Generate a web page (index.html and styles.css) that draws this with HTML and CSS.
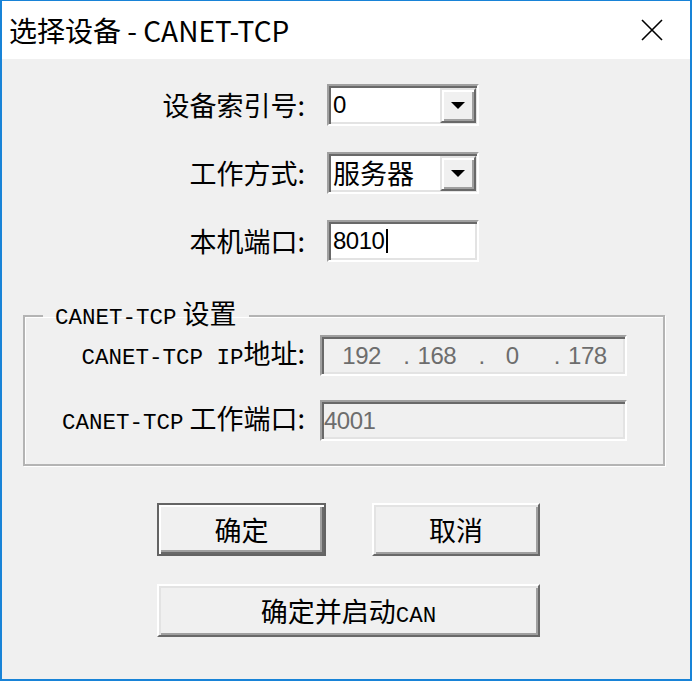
FILE: index.html
```html
<!DOCTYPE html>
<html>

<head>
  <meta charset="utf-8" />
  <title>选择设备 - CANET-TCP</title>
  <link rel="stylesheet" href="styles.css">
</head>

<body>
  <div class="window">
    <div class="titlebar">
      <span class="title">选择设备 - CANET-TCP</span>
      <svg class="close" width="22" height="22" viewBox="0 0 22 22">
        <path d="M1 1L21 21M21 1L1 21" stroke="#000" stroke-width="1.6" fill="none" />
      </svg>
    </div>

    <div class="body">
      <div class="row">
        <span class="label">设备索引号:</span>
        <div class="combo"><span class="num">0</span><span class="drop"></span></div>
      </div>
      <div class="row">
        <span class="label">工作方式:</span>
        <div class="combo"><span class="cjk">服务器</span><span class="drop"></span></div>
      </div>
      <div class="row">
        <span class="label">本机端口:</span>
        <div class="edit"><span class="num">8010</span><span class="caret"></span></div>
      </div>

      <fieldset class="group">
        <legend><span class="lat">CANET-TCP</span> 设置</legend>
        <div class="grow">
          <span class="label glabel"><span class="lat">CANET-TCP IP</span>地址:</span>
          <div class="edit off ip">
            <span class="seg"><span class="dot"></span><span class="num">192</span></span>
            <span class="seg"><span class="dot">.</span><span class="num">168</span></span>
            <span class="seg"><span class="dot">.</span><span class="num">0</span></span>
            <span class="seg"><span class="dot">.</span><span class="num">178</span></span>
          </div>
        </div>
        <div class="grow">
          <span class="label glabel"><span class="lat">CANET-TCP</span> 工作端口:</span>
          <div class="edit off ip"><span class="num">4001</span></div>
        </div>
      </fieldset>

      <div class="buttons">
        <button class="btn default">确定</button>
        <button class="btn">取消</button>
        <button class="btn wide">确定并启动<span class="lat">CAN</span></button>
      </div>
    </div>
  </div>
</body>

</html>
```

FILE: styles.css
```css
* {
  box-sizing: border-box;
}

body {
  margin: 0;
  font-family: "Noto Sans CJK SC", sans-serif;
  color: #000;
}

.window {
  width: 692px;
  height: 681px;
  border: 2px solid #1883d7;
  border-top-width: 1px;
  background: #f0f0f0;
  overflow: hidden;
}

.titlebar {
  height: 58px;
  background: #fff;
  display: flex;
  align-items: center;
  justify-content: space-between;
  padding: 0 27px 0 7px;
}

.title {
  font-size: 28px;
  line-height: 32px;
}

.body {
  padding-top: 25px;
}

.row {
  display: flex;
  align-items: center;
  height: 42px;
  margin-bottom: 26px;
}

.row:nth-of-type(3) {
  margin-bottom: 0;
}

.label {
  width: 303px;
  text-align: right;
  font-size: 27px;
  line-height: 30px;
}

.lat {
  font-family: "Liberation Mono", monospace;
  font-size: 22.5px;
}

.num {
  font-family: "Liberation Sans", sans-serif;
  font-size: 24px;
  letter-spacing: -0.5px;
}

.cjk {
  font-size: 27px;
  line-height: 30px;
}

.combo,
.edit {
  width: 152px;
  height: 42px;
  margin-left: 22px;
  display: flex;
  align-items: center;
  padding-left: 4px;
  background: #fff;
  border: 2px solid;
  border-color: #a0a0a0 #fff #fff #a0a0a0;
  box-shadow: inset 2px 2px #696969, inset -2px -2px #e3e3e3;
}

.drop {
  width: 36px;
  height: 35px;
  margin-left: auto;
  margin-right: 1px;
  background: #f0f0f0;
  border: 2px solid;
  border-color: #e3e3e3 #696969 #696969 #e3e3e3;
  box-shadow: inset 2px 2px #fff, inset -2px -2px #a0a0a0;
  display: flex;
  align-items: center;
  justify-content: center;
}

.drop::after {
  content: "";
  border-left: 7px solid transparent;
  border-right: 7px solid transparent;
  border-top: 7px solid #000;
}

.caret {
  width: 2px;
  height: 24px;
  margin-left: 2px;
  background: #000;
}

.group {
  margin: 38px 0 0 21px;
  width: 642px;
  min-width: 0;
  padding: 4px 0 23px 0;
  border: 2px solid #b4b4b4;
  box-shadow: inset 1px 1px #fff, 1px 1px #fff;
}

.group legend {
  margin-left: 18px;
  padding: 0 12px;
  font-size: 27px;
  line-height: 26px;
}

.grow {
  display: flex;
  align-items: center;
  height: 41px;
}

.grow + .grow {
  margin-top: 24px;
}

.glabel {
  width: 280px;
}

.edit.off {
  background: #f0f0f0;
  color: #6d6d6d;
}

.ip {
  width: 307px;
  height: 41px;
  margin-left: 15px;
  padding-left: 2px;
}

.seg {
  flex: 1;
  display: flex;
  align-items: center;
}

.seg .dot {
  width: 14px;
  padding-left: 4px;
  font-family: "Liberation Sans", sans-serif;
  font-size: 24px;
}

.seg .num {
  flex: 1;
  text-align: center;
  padding-right: 14px;
}

.buttons {
  margin: 37px 0 0 155px;
  width: 383px;
  display: flex;
  flex-wrap: wrap;
  gap: 28px 46px;
}

.btn {
  width: 168px;
  height: 53px;
  padding: 0;
  background: #f0f0f0;
  font-family: "Noto Sans CJK SC", sans-serif;
  font-size: 27px;
  color: #000;
  border: 2px solid;
  border-color: #fff #696969 #696969 #fff;
  box-shadow: inset 2px 2px #e3e3e3, inset -2px -2px #a0a0a0;
}

.btn.default {
  width: 169px;
  border-color: #646464;
  box-shadow: inset 2px 2px #fff, inset -2px -2px #696969, inset -4px -4px #a0a0a0;
}

.btn.wide {
  width: 383px;
}
```
